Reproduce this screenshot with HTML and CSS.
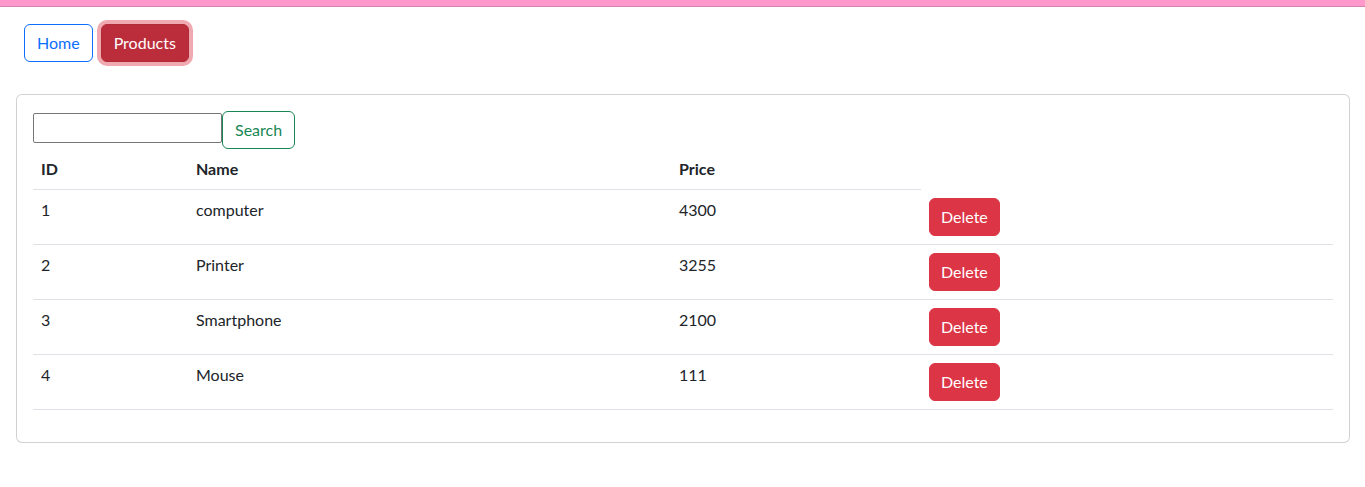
FILE: index.html
```html
<!DOCTYPE html>
<html>
<head>
<meta charset="utf-8">
<link rel="stylesheet" href="styles.css">
</head>
<body>
<div class="topbar"></div>
<div class="page">
  <nav class="nav">
    <button class="btn btn-outline-primary">Home</button>
    <button class="btn btn-danger active">Products</button>
  </nav>
  <div class="card">
    <div class="card-body">
      <div class="search"><input type="text" class="search-input"><button class="btn btn-outline-success">Search</button></div>
      <table class="table">
        <colgroup>
          <col class="c-id"><col class="c-name"><col class="c-price"><col class="c-act">
        </colgroup>
        <thead>
          <tr><th>ID</th><th>Name</th><th>Price</th></tr>
        </thead>
        <tbody>
          <tr><td>1</td><td>computer</td><td>4300</td><td><button class="btn btn-delete">Delete</button></td></tr>
          <tr><td>2</td><td>Printer</td><td>3255</td><td><button class="btn btn-delete">Delete</button></td></tr>
          <tr><td>3</td><td>Smartphone</td><td>2100</td><td><button class="btn btn-delete">Delete</button></td></tr>
          <tr><td>4</td><td>Mouse</td><td>111</td><td><button class="btn btn-delete">Delete</button></td></tr>
        </tbody>
      </table>
    </div>
  </div>
</div>
</body>
</html>
```
FILE: styles.css
```css
* { box-sizing: border-box; }
html, body { margin: 0; padding: 0; }
body {
  font-family: "Lato", "Noto Sans", "Liberation Sans", sans-serif;
  font-size: 16px;
  line-height: 1.5;
  color: #212529;
  background: #fff;
}
.topbar {
  height: 7px;
  background: #ff99cc;
  border-bottom: 1px solid #d884b3;
}
.page {
  padding: 17px 15px 0 16px;
}
.nav {
  display: flex;
  gap: 8px;
  padding: 0 8px;
  margin-bottom: 32px;
}
.btn {
  font-family: inherit;
  font-size: 16px;
  line-height: 24px;
  padding: 6px 12px;
  border: 1px solid transparent;
  border-radius: 6px;
  background: transparent;
  cursor: pointer;
}
.btn-outline-primary { color: #0d6efd; border-color: #0d6efd; }
.btn-danger.active {
  color: #fff;
  background: #bb2d3b;
  border-color: #b02a37;
  box-shadow: 0 0 0 4px rgba(225, 83, 97, 0.5);
}
.btn-outline-success { color: #198754; border-color: #198754; }
.btn-delete { color: #fff; background: #dc3545; border-color: #dc3545; padding: 6px 11px; }
.card {
  border: 1px solid rgba(0, 0, 0, 0.175);
  border-radius: 6px;
  background: #fff;
}
.card-body { padding: 16px; }
.search {
  display: flex;
  align-items: center;
}
.search-input {
  width: 189px;
  height: 30px;
  margin-top: -4px;
  border: 1px solid #767676;
  border-radius: 2px;
  font-family: inherit;
  font-size: 13px;
  padding: 1px 2px;
}
.table {
  width: 100%;
  border-collapse: collapse;
  margin-bottom: 16px;
}
.c-id { width: 155px; }
.c-name { width: 483px; }
.c-price { width: 250px; }
.table th, .table td {
  padding: 8px;
  text-align: left;
  vertical-align: top;
  border-bottom: 1px solid #dee2e6;
}
.table th { font-weight: 700; }
```
